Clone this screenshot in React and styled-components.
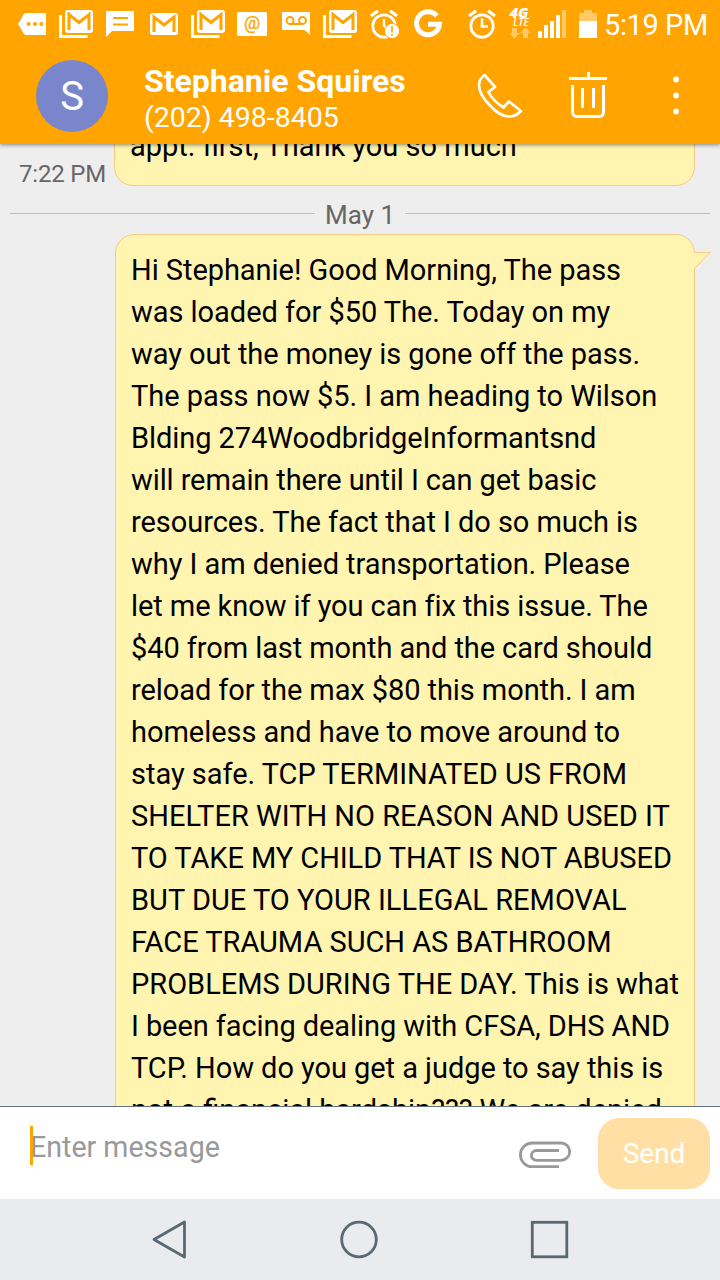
import React from "react";
import styled, { createGlobalStyle } from "styled-components";

const GlobalStyle = createGlobalStyle`
  * { box-sizing: border-box; }
  body { margin: 0; background: #eeeeee; font-family: Roboto, "Liberation Sans", sans-serif; }
`;

const Screen = styled.div`
  display: flex;
  flex-direction: column;
  width: 720px;
  height: 1280px;
  overflow: hidden;
`;

const Header = styled.header`
  flex: none;
  height: 144px;
  background: #ffa400;
  color: #fff;
  z-index: 1;
  box-shadow: 0 1px 4px rgba(0, 0, 0, 0.45);
`;

const StatusBar = styled.div`
  display: flex;
  align-items: flex-start;
  height: 50px;
  padding-top: 8px;
`;

const StatusIcon = styled.svg`
  flex: none;
  display: block;
  height: 32px;
  margin-left: ${(p) => p.$gap}px;
  overflow: visible;
`;

const Clock = styled.span`
  margin-left: 7px;
  font-size: 29px;
  line-height: 34px;
  letter-spacing: -0.4px;
  white-space: nowrap;
`;

const AppBar = styled.div`
  display: flex;
  align-items: center;
  height: 92px;
  padding-left: 36px;
`;

const Avatar = styled.div`
  flex: none;
  display: flex;
  align-items: center;
  justify-content: center;
  width: 72px;
  height: 72px;
  padding-top: 2px;
  border-radius: 50%;
  background: #7986cb;
  font-size: 40px;
  line-height: 72px;
`;

const Contact = styled.div`
  flex: none;
  width: 369px;
  padding: 6px 0 0 36px;
  white-space: nowrap;
`;

const Name = styled.div`
  font-size: 32px;
  line-height: 37px;
  font-weight: 700;
`;

const Phone = styled.div`
  font-size: 28.5px;
  line-height: 36px;
`;

const ActionIcon = styled.svg`
  flex: none;
  display: block;
  height: 72px;
  margin-left: ${(p) => p.$gap || 0}px;
`;

const Thread = styled.main`
  flex: 1;
  min-height: 0;
  overflow: hidden;
  display: flex;
  flex-direction: column;
`;

const MessageRow = styled.div`
  flex: none;
  display: flex;
  align-items: flex-end;
  justify-content: flex-end;
  padding-right: 25px;
  margin-top: ${(p) => p.$top || 0}px;
`;

const Timestamp = styled.span`
  margin-right: 8px;
  font-size: 24px;
  line-height: 24px;
  letter-spacing: -0.2px;
  color: #666;
  white-space: nowrap;
`;

const Bubble = styled.div`
  position: relative;
  width: ${(p) => p.$width}px;
  padding: ${(p) => p.$pad};
  border: 1px solid #f8ca86;
  border-radius: 19px;
  background: #fff5b0;
  color: #000;
`;

const Tail = styled.svg`
  position: absolute;
  top: 16px;
  right: -17px;
  width: 18px;
  height: 19px;
`;

const Line = styled.div`
  font-size: 29px;
  line-height: 42px;
  letter-spacing: ${(p) => p.$track || 0}px;
  white-space: nowrap;
`;

const DateDivider = styled.div`
  flex: none;
  display: flex;
  align-items: center;
  height: 48px;
  padding: 10px 10px 0;
`;

const Rule = styled.span`
  flex: 1;
  height: 1px;
  margin-bottom: 3px;
  background: #bdbdbd;
`;

const DateLabel = styled.span`
  width: 90px;
  text-align: center;
  font-size: 26px;
  line-height: 34px;
  color: #666;
`;

const Composer = styled.footer`
  flex: none;
  display: flex;
  height: 93px;
  border-top: 1px solid #5f747e;
  background: #fff;
  padding-left: 30px;
`;

const Input = styled.div`
  position: relative;
  width: 489px;
  height: 39px;
  margin-top: 19px;
  color: #999;
  font-size: 28.6px;
  line-height: 42px;
`;

const Caret = styled.span`
  position: absolute;
  left: 0;
  top: 0;
  width: 3px;
  height: 39px;
  background: #ffa400;
`;

const ClipIcon = styled.svg`
  flex: none;
  width: 52px;
  height: 28px;
  margin-top: 34px;
`;

const SendButton = styled.button`
  width: 112px;
  height: 71px;
  margin: 11px 0 0 27px;
  padding: 0;
  border: 0;
  border-radius: 21px;
  background: #ffdfa3;
  color: #fff;
  font-family: inherit;
  font-size: 28px;
  line-height: 70px;
`;

const NavBar = styled.nav`
  flex: none;
  display: flex;
  align-items: center;
  height: 81px;
  background: #e9ebee;
  padding: 0 0 1px 152px;
`;

const NavIcon = styled.svg`
  flex: none;
  width: 40px;
  height: 40px;
  margin-right: ${(p) => p.$gap || 0}px;
  fill: none;
  stroke: #5a6871;
  stroke-width: 2.8;
`;

function MailStack({ gap }) {
  return (
    <StatusIcon $gap={gap} width="34" viewBox="59 8 34 32" fill="none">
      <path d="M60.5 15V36.5H87.5" stroke="#fff" strokeWidth="3" />
      <rect x="65" y="10" width="28" height="23" rx="3" fill="#fff" />
      <path d="M69 30V14.5L79 22.5L89 14.5V30" stroke="#ffa400" strokeWidth="3" />
    </StatusIcon>
  );
}

function AlarmShape() {
  return (
    <>
      <circle cx="482" cy="26" r="11.2" stroke="#fff" strokeWidth="2.8" />
      <path d="M469 16L476 10.8M495 16L488 10.8" stroke="#fff" strokeWidth="3.2" />
    </>
  );
}

const messageLines = [
  ["Hi Stephanie! Good Morning, The pass", -0.05],
  ["was loaded for $50 The. Today on my", -0.04],
  ["way out the money is gone off the pass.", -0.07],
  ["The pass now $5. I am heading to Wilson", -0.04],
  ["Blding 274WoodbridgeInformantsnd", -0.06],
  ["will remain there until I can get basic", -0.1],
  ["resources. The fact that I do so much is", -0.05],
  ["why I am denied transportation. Please", -0.05],
  ["let me know if you can fix this issue. The", -0.07],
  ["$40 from last month and the card should", -0.08],
  ["reload for the max $80 this month. I am", -0.08],
  ["homeless and have to move around to", -0.04],
  ["stay safe. TCP TERMINATED US FROM", -0.03],
  ["SHELTER WITH NO REASON AND USED IT", 0],
  ["TO TAKE MY CHILD THAT IS NOT ABUSED", -0.06],
  ["BUT DUE TO YOUR ILLEGAL REMOVAL", 0.02],
  ["FACE TRAUMA SUCH AS BATHROOM", -0.02],
  ["PROBLEMS DURING THE DAY. This is what", 0],
  ["I been facing dealing with CFSA, DHS AND", -0.08],
  ["TCP. How do you get a judge to say this is", -0.05],
  ["not a financial hardship??? We are denied", 0],
];

export default function App() {
  return (
    <Screen>
      <GlobalStyle />
      <Header>
        <StatusBar>
          <StatusIcon $gap={18} width="28" viewBox="18 8 28 32">
            <path d="M18 24L24 14Q24.7 13 26 13H46V35H26Q24.7 35 24 34Z" fill="#fff" />
            <g fill="#ffa400"><circle cx="28.7" cy="24" r="2" /><circle cx="35" cy="24" r="2" /><circle cx="41.3" cy="24" r="2" /></g>
          </StatusIcon>
          <MailStack gap={13} />
          <StatusIcon $gap={13} width="28" viewBox="106 8 28 32">
            <path d="M106 11H134V31H112L106 37Z" fill="#fff" />
            <path d="M113 18H128M113 24.5H128" stroke="#ffa400" strokeWidth="1.8" />
          </StatusIcon>
          <StatusIcon $gap={16} width="28" viewBox="150 8 28 32" fill="none">
            <rect x="150" y="13" width="28" height="22" rx="2.5" fill="#fff" />
            <path d="M154 32V17L164 25L174 17V32" stroke="#ffa400" strokeWidth="3" />
          </StatusIcon>
          <MailStack gap={13} />
          <StatusIcon $gap={12} width="30" viewBox="237 8 30 32">
            <rect x="237" y="12" width="30" height="24" rx="1.5" fill="#fff" />
            <text x="252" y="29" textAnchor="middle" fontFamily="Roboto" fontSize="18" fill="#ffa400" stroke="#ffa400" strokeWidth="0.3">@</text>
          </StatusIcon>
          <StatusIcon $gap={15} width="28" viewBox="282 8 28 32" fill="none">
            <path d="M282 12H310V35L304.5 30H282Z" fill="#fff" />
            <path d="M290 24H302.500" stroke="#ffa400" strokeWidth="2" />
            <circle cx="290" cy="20.400" r="3.5" stroke="#ffa400" strokeWidth="2" />
            <circle cx="302.500" cy="20.400" r="3.5" stroke="#ffa400" strokeWidth="2" />
          </StatusIcon>
          <MailStack gap={13} />
          <StatusIcon $gap={13} width="30" viewBox="468 8 30 32" fill="none">
            <AlarmShape />
            <path d="M482 19V25.500L484 28" stroke="#fff" strokeWidth="2.4" />
            <circle cx="490" cy="31" r="7.600" fill="#fff" stroke="#ffa400" strokeWidth="1" />
            <path d="M490 26V32.500M490 34V36" stroke="#ffa400" strokeWidth="1.600" />
          </StatusIcon>
          <StatusIcon $gap={14} width="28" viewBox="414 8 28 32" fill="none">
            <path d="M436.800 15.800A11.500 11.500 0 1 0 439.500 24.300H428" stroke="#fff" strokeWidth="5" />
          </StatusIcon>
          <StatusIcon $gap={26} width="28" viewBox="468 8 28 32" fill="none">
            <AlarmShape />
            <path d="M482 18.500V26.500H488" stroke="#fff" strokeWidth="2.6" />
          </StatusIcon>
          <StatusIcon $gap={13} width="22" viewBox="509 8 22 32">
            <text x="509.500" y="17.500" textLength="19" lengthAdjust="spacingAndGlyphs" fontFamily="Open Sans" fontWeight="800" fontStyle="italic" fontSize="13.5" fill="#fff">4G</text>
            <text x="513" y="26" textLength="16" lengthAdjust="spacingAndGlyphs" fontFamily="Open Sans" fontWeight="600" fontStyle="italic" fontSize="9.800" fill="#fff">LTE</text>
            <path d="M512 28H517V33H520L514.500 38.500L509 33H512ZM523 38H528V33H531L525.500 27.500L520 33H523Z" fill="#ffc966" />
          </StatusIcon>
          <StatusIcon $gap={7} width="28" viewBox="538 8 28 32">
            <path d="M538 31H542V38H538ZM544 25H548V38H544ZM550 21H554V38H550ZM556 15H560V38H556Z" fill="#fff" />
            <path d="M562 10H566V38H562Z" fill="#ffc966" />
          </StatusIcon>
          <StatusIcon $gap={13} width="18" viewBox="579 8 18 32">
            <path d="M584 10H592V13H597V21H579V13H584Z" fill="#ffc966" />
            <path d="M579 21H597V38H579Z" fill="#fff" />
          </StatusIcon>
          <Clock>5:19 PM</Clock>
        </StatusBar>
        <AppBar>
          <Avatar>S</Avatar>
          <Contact>
            <Name>Stephanie Squires</Name>
            <Phone>(202) 498-8405</Phone>
          </Contact>
          <ActionIcon width="46" viewBox="477 60 46 72" fill="none" stroke="#fff" strokeWidth="2.7">
            <path d="M484.500 75L495 87L488.500 92Q493 101 503.500 107.500L509 101.500L521 111Q516 116.500 509 116.500Q500 116.500 490 105.500Q479 94.500 479 85Q479 79 484.500 75Z" strokeLinejoin="round" />
          </ActionIcon>
          <ActionIcon $gap={46} width="38" viewBox="569 60 38 72" fill="none" stroke="#fff" strokeWidth="3">
            <path d="M569 78.500H607M588.500 72V79M572.500 85V111.500Q572.500 116.500 577 116.500H599.500Q603.500 116.500 603.500 111.500V85M582.500 88V108M593.500 88V108" />
          </ActionIcon>
          <ActionIcon $gap={66} width="6" viewBox="673 60 6 72" fill="#fff">
            <circle cx="676" cy="79.500" r="3" /><circle cx="676" cy="95.500" r="3" /><circle cx="676" cy="111.500" r="3" />
          </ActionIcon>
        </AppBar>
      </Header>
      <Thread>
        <MessageRow $top={-20}>
          <Timestamp>7:22 PM</Timestamp>
          <Bubble $width={581} $pad="0 15px 18px">
            <Line>appt. first, Thank you so much</Line>
          </Bubble>
        </MessageRow>
        <DateDivider>
          <Rule />
          <DateLabel>May 1</DateLabel>
          <Rule />
        </DateDivider>
        <MessageRow>
          <Bubble $width={580} $pad="14px 15px 18px">
            <Tail viewBox="0 0 18 19">
              <path d="M0 1.500H17L1.500 17.500H0Z" fill="#fff5b0" />
              <path d="M1 1.500H17L1.500 17.500" fill="none" stroke="#f8ca86" />
            </Tail>
            {messageLines.map(([line, track]) => (
              <Line key={line} $track={track}>{line}</Line>
            ))}
          </Bubble>
        </MessageRow>
      </Thread>
      <Composer>
        <Input>
          Enter message
          <Caret />
        </Input>
        <ClipIcon viewBox="519 1141 52 28" fill="none" stroke="#999" strokeWidth="2.8">
          <path d="M559 1166.600H532.200A11.800 11.800 0 0 1 532.200 1143H561A8.650 8.650 0 0 1 561 1160.300H536.300A4.900 4.900 0 0 1 536.300 1150.500H559" />
        </ClipIcon>
        <SendButton>Send</SendButton>
      </Composer>
      <NavBar>
        <NavIcon $gap={147} viewBox="152 1219 40 40">
          <path d="M184.500 1222V1257L154 1239.500Z" strokeLinejoin="round" />
        </NavIcon>
        <NavIcon $gap={151} viewBox="339 1219 40 40">
          <circle cx="359" cy="1239.500" r="17.300" />
        </NavIcon>
        <NavIcon viewBox="530 1219 40 40">
          <rect x="532.300" y="1222.300" width="34.500" height="34.500" />
        </NavIcon>
      </NavBar>
    </Screen>
  );
}
